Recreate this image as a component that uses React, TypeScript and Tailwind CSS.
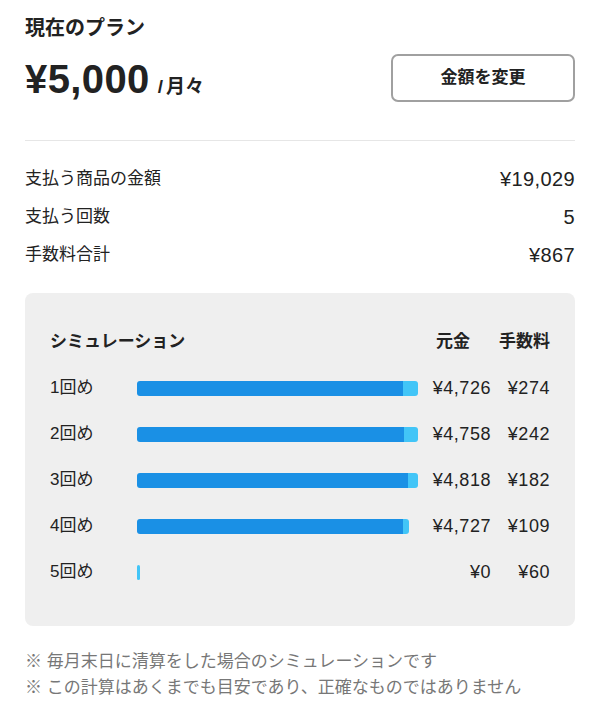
const font = {
  fontFamily: '"Liberation Sans", "Noto Sans CJK JP", sans-serif',
};

type SimRow = { label: string; principal: number; fee: number };

const rows: SimRow[] = [
  { label: "1回め", principal: 4726, fee: 274 },
  { label: "2回め", principal: 4758, fee: 242 },
  { label: "3回め", principal: 4818, fee: 182 },
  { label: "4回め", principal: 4727, fee: 109 },
  { label: "5回め", principal: 0, fee: 60 },
];

const BAR_MAX = 5000;
const BAR_WIDTH = 281;

const yen = (n: number) => `¥${n.toLocaleString("en-US")}`;

const SummaryRow = ({ label, value }: { label: string; value: string }) => (
  <div className="flex h-[38px] items-center justify-between">
    <span className="text-[17px]">{label}</span>
    <span className="text-[20px] tracking-[0.02em]">{value}</span>
  </div>
);

export default function App() {
  return (
    <div
      className="min-h-screen w-[600px] bg-white px-[25px] text-[#222222]"
      style={font}
    >
      {/* plan header */}
      <div className="pt-[14px] text-[20px] font-bold leading-[28px]">現在のプラン</div>
      <div className="mt-[12px] flex items-center justify-between">
        <div className="flex items-baseline pt-[4px]">
          <span className="text-[40px] font-bold leading-none tracking-[0.01em]">¥5,000</span>
          <span className="ml-[8px] text-[19px] font-bold">/</span>
          <span className="ml-[3px] text-[19px] font-bold">月々</span>
        </div>
        <button
          type="button"
          className="h-[48px] w-[184px] rounded-[7px] border-2 border-[#a0a0a0] bg-white text-[17px] font-bold text-[#222222]"
        >
          金額を変更
        </button>
      </div>

      <div className="mt-[38px] border-t border-[#e6e6e6]" />

      {/* totals */}
      <div className="pt-[19px]">
        <SummaryRow label="支払う商品の金額" value="¥19,029" />
        <SummaryRow label="支払う回数" value="5" />
        <SummaryRow label="手数料合計" value="¥867" />
      </div>

      {/* simulation */}
      <div className="mt-[19px] rounded-[8px] bg-[#efefef] px-[25px] pb-[31px] pt-[26px]">
        <div className="flex h-[46px] items-center text-[17px] font-bold">
          <span className="flex-1">シミュレーション</span>
          <span>元金</span>
          <span className="ml-[29px]">手数料</span>
        </div>
        {rows.map((row) => {
          const principalW = (row.principal / BAR_MAX) * BAR_WIDTH;
          const feeW = Math.max((row.fee / BAR_MAX) * BAR_WIDTH, 3);
          return (
            <div key={row.label} className="flex h-[46px] items-center text-[17px]">
              <span className="w-[87px]">{row.label}</span>
              <div className="w-[281px]">
                <div className="flex h-[15px] overflow-hidden rounded-[3px]" style={{ width: principalW + feeW }}>
                  <div className="h-full bg-[#1a90e5]" style={{ width: principalW }} />
                  <div className="h-full bg-[#42c5f7]" style={{ width: feeW }} />
                </div>
              </div>
              <span className="w-[73px] text-right text-[18px] tracking-[0.03em]">{yen(row.principal)}</span>
              <span className="w-[59px] text-right text-[18px] tracking-[0.03em]">{yen(row.fee)}</span>
            </div>
          );
        })}
      </div>

      {/* notes */}
      <div className="mt-[23px] text-[17px] leading-[26px] text-[#777777]">
        <p>※ 毎月末日に清算をした場合のシミュレーションです</p>
        <p>※ この計算はあくまでも目安であり、正確なものではありません</p>
      </div>
    </div>
  );
}
